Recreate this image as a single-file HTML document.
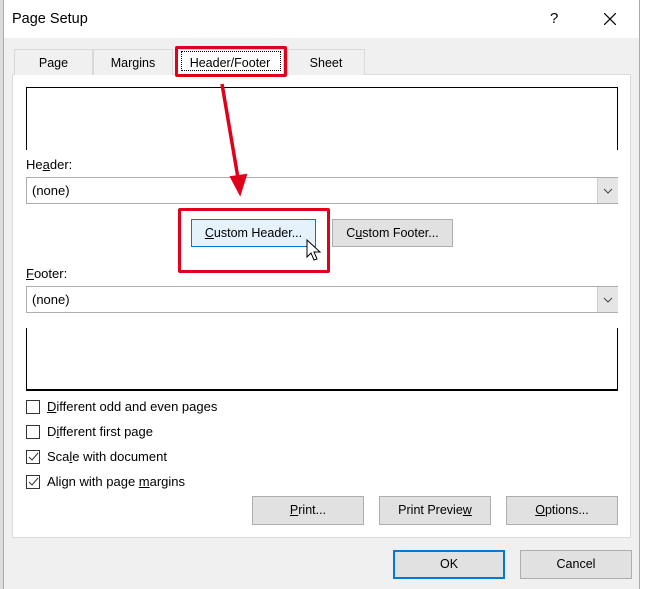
<!DOCTYPE html><html><head><style>
body{margin:0;width:646px;height:589px;position:relative;overflow:hidden;background:#fff;font-family:"Liberation Sans",sans-serif;font-size:13px;color:#000}
.a{position:absolute}
.btn{position:absolute;background:#e1e1e1;border:1px solid #adadad;box-sizing:border-box;text-align:center;font-size:12.5px}
.cb{position:absolute;left:26px;width:14px;height:14px;border:1px solid #333;background:#fff;box-sizing:border-box}
.lbl{position:absolute;left:47px;font-size:13px}
.tab{position:absolute;top:49px;height:26px;box-sizing:border-box;border:1px solid #d9d9d9;border-bottom:none;background:#f0f0f0;text-align:center;line-height:26px;font-size:12.5px}
</style></head><body>
<div class="a" style="left:0;top:0;width:3px;height:589px;background:#dcdcdc"></div>
<div class="a" style="left:3px;top:0;width:637px;height:589px;background:#f0f0f0;border-left:1px solid #aaa;border-right:1px solid #aaa;box-sizing:border-box"></div>
<div class="a" style="left:4px;top:0;width:635px;height:38px;background:#fff"></div>
<div class="a" style="left:12px;top:11px;font-size:14.5px">Page Setup</div>
<div class="a" style="left:550px;top:10px;font-size:15px">?</div>
<svg class="a" style="left:604px;top:13px" width="12" height="12"><path d="M0 0L12 12M12 0L0 12" stroke="#000" stroke-width="1.2"/></svg>
<div class="a" style="left:12px;top:74px;width:619px;height:464px;background:#fff;border:1px solid #dadada;box-sizing:border-box"></div>
<div class="tab" style="left:14px;width:79px">Page</div>
<div class="tab" style="left:93px;width:80px">Margins</div>
<div class="tab" style="left:176px;width:108px;background:#fff;height:27px">Header/Footer</div>
<div class="tab" style="left:287px;width:78px">Sheet</div>
<div class="a" style="left:175px;top:46px;width:112px;height:31px;border:3px solid #e0001b;box-sizing:border-box;border-radius:2px"></div>
<div class="a" style="left:181px;top:51px;width:100px;height:20px;border:1px dotted #000;box-sizing:border-box"></div>
<div class="a" style="left:26px;top:87px;width:592px;height:63px;border:1px solid #000;border-bottom:none;box-sizing:border-box"></div>
<div class="a" style="left:26px;top:157px">He<u>a</u>der:</div>
<div class="a" style="left:26px;top:177px;width:592px;height:27px;border:1px solid #adadad;box-sizing:border-box;background:#fff;padding:5px 5px">(none)</div>
<div class="a" style="left:597px;top:178px;width:20px;height:25px;background:#e5e5e5;border-left:1px solid #ccc"><svg width="20" height="25"><path d="M6 11l4 4 4-4" fill="none" stroke="#444"/></svg></div>
<div class="btn" style="left:191px;top:219px;width:125px;height:28px;line-height:26px;background:#e5f1fb;border-color:#0078d7"><u>C</u>ustom Header...</div>
<div class="btn" style="left:332px;top:219px;width:121px;height:28px;line-height:26px">C<u>u</u>stom Footer...</div>
<div class="a" style="left:178px;top:208px;width:152px;height:65px;border:3px solid #e0001b;box-sizing:border-box;border-radius:2px"></div>
<svg class="a" style="left:305px;top:238px" width="20" height="28"><path d="M2 2L2 19L6 15L9 22L12 21L9 14L15 14Z" fill="#fff" stroke="#000"/></svg>
<div class="a" style="left:26px;top:266px"><u>F</u>ooter:</div>
<div class="a" style="left:26px;top:286px;width:592px;height:27px;border:1px solid #adadad;box-sizing:border-box;background:#fff;padding:5px 5px">(none)</div>
<div class="a" style="left:597px;top:287px;width:20px;height:25px;background:#e5e5e5;border-left:1px solid #ccc"><svg width="20" height="25"><path d="M6 11l4 4 4-4" fill="none" stroke="#444"/></svg></div>
<div class="a" style="left:26px;top:328px;width:592px;height:63px;border:1px solid #000;border-top:none;border-bottom:2px solid #000;box-sizing:border-box"></div>
<svg class="a" style="left:0;top:0" width="646" height="300"><path d="M222 84L238 178" stroke="#e0001b" stroke-width="3.5"/><path d="M231 177L240 194L246 175Z" fill="#e0001b" stroke="#e0001b" stroke-width="2"/></svg>
<div class="cb" style="top:400px"></div><div class="lbl" style="top:399px"><u>D</u>ifferent odd and even pages</div>
<div class="cb" style="top:425px"></div><div class="lbl" style="top:424px">D<u>i</u>fferent first page</div>
<div class="cb" style="top:450px"><svg width="12" height="12"><path d="M2 6l3 3 6-7" fill="none" stroke="#333"/></svg></div><div class="lbl" style="top:449px">Sca<u>l</u>e with document</div>
<div class="cb" style="top:475px"><svg width="12" height="12"><path d="M2 6l3 3 6-7" fill="none" stroke="#333"/></svg></div><div class="lbl" style="top:474px">Align with page <u>m</u>argins</div>
<div class="btn" style="left:252px;top:496px;width:112px;height:29px;line-height:27px"><u>P</u>rint...</div>
<div class="btn" style="left:379px;top:496px;width:112px;height:29px;line-height:27px">Print Previe<u>w</u></div>
<div class="btn" style="left:506px;top:496px;width:112px;height:29px;line-height:27px"><u>O</u>ptions...</div>
<div class="btn" style="left:393px;top:550px;width:112px;height:29px;line-height:25px;border:2px solid #0078d7">OK</div>
<div class="btn" style="left:520px;top:550px;width:112px;height:29px;line-height:27px">Cancel</div>
</body></html>
